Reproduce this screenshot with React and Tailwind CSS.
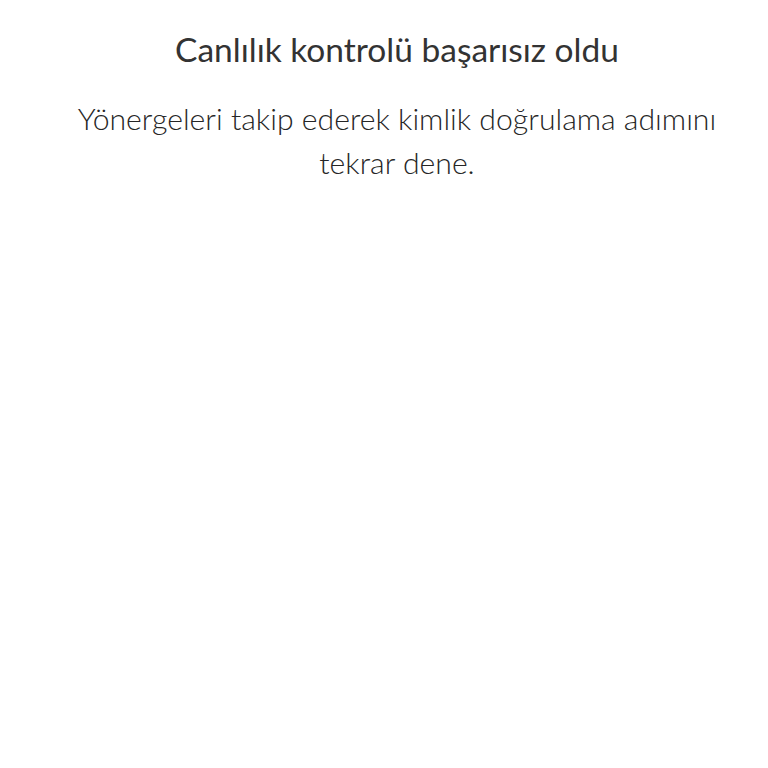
import React from "react";

function App() {
    return (
        <div className="w-[768px] h-[768px] bg-white flex flex-col items-center pl-[26px] font-['Lato','Noto_Sans',sans-serif] text-[#333333]">
            <h1 className="mt-[27px] text-[33.5px] leading-[44px] font-normal text-center">
                Canlılık kontrolü başarısız oldu
            </h1>
            <p className="mt-[25px] w-[690px] text-[30.2px] leading-[44px] font-light text-[#262626] text-center">
                Yönergeleri takip ederek kimlik doğrulama adımını tekrar dene.
            </p>
        </div>
    );
}

export default App;
